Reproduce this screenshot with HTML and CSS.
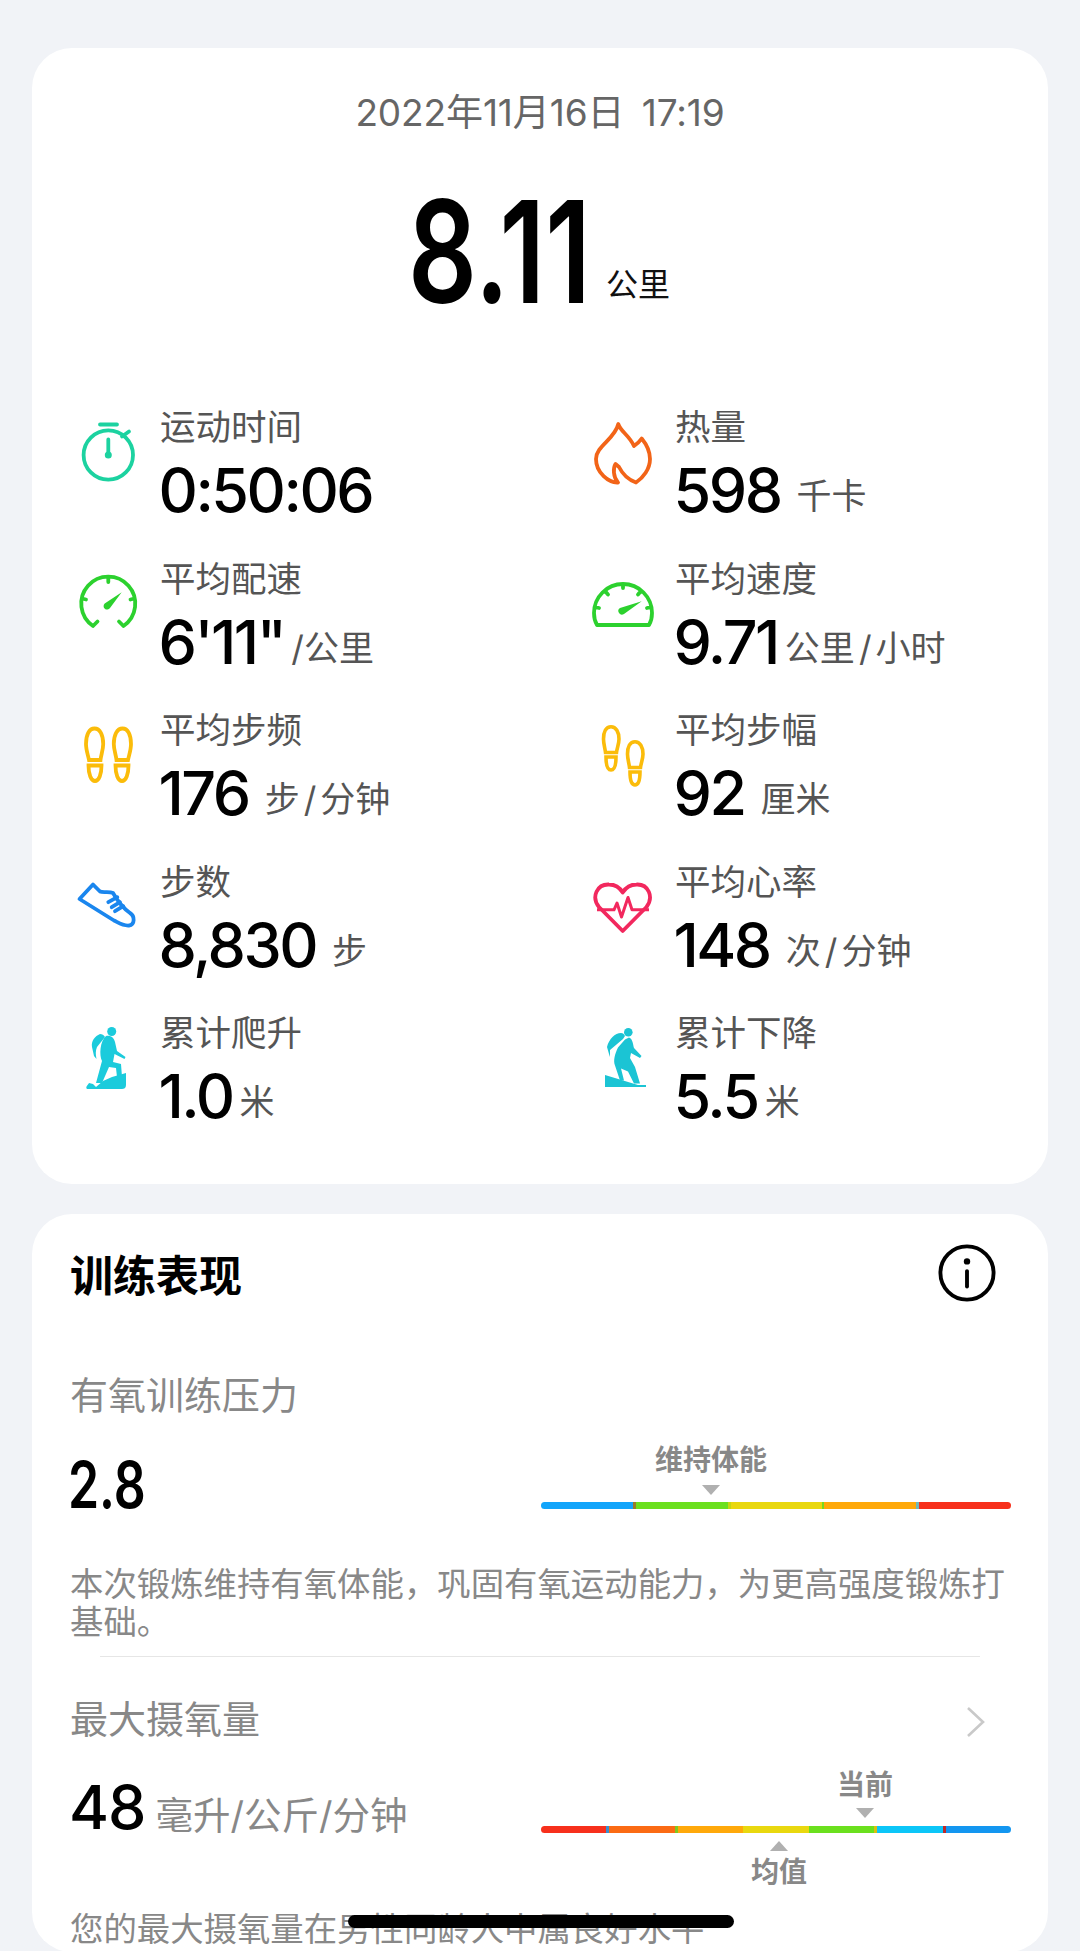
FILE: index.html
```html
<!DOCTYPE html>
<html lang="zh-CN">
<head>
<meta charset="utf-8">
<title>运动记录</title>
<link rel="stylesheet" href="styles.css">
</head>
<body>
<main class="page">
  <section class="card summary">
    <div class="date">2022年11月16日 17:19</div>
    <div class="total"><span class="total-num">8.11</span><span class="total-unit">公里</span></div>
    <div class="stats">
      <div class="stat">
        <svg class="ico" viewBox="0 0 64 64"><g fill="none" stroke="#1cd2a0" stroke-width="3.8" stroke-linecap="round"><circle cx="32.300" cy="34" r="24.700"/><path d="M24 3.500h17M46 15.500l7-5M32.300 18.500V33"/></g><circle cx="32.300" cy="34" r="3.500" fill="#1cd2a0"/></svg>
        <div class="txt"><div class="lab">运动时间</div><div class="val">0:50:06</div></div>
      </div>
      <div class="stat">
        <svg class="ico" viewBox="0 0 64 64"><path d="M27.300 3C29 10 38 14 43 25c3-2 6-5 7.700-7.500C56 24 59 30 59 38c0 10-7 19-14 23.500-7-2.500-13-7.500-17-15.500l-3.500-3c-2.500 4-2.500 13 2.500 18.500C18 62 5 52 5 38 5 25 24 18 27.300 3Z" fill="none" stroke="#f26418" stroke-width="3.800" stroke-linejoin="round"/></svg>
        <div class="txt"><div class="lab">热量</div><div class="val">598<span class="unit u-gap">千卡</span></div></div>
      </div>
      <div class="stat">
        <svg class="ico" viewBox="0 0 64 64"><g fill="none" stroke="#2cd12e" stroke-width="3.800" stroke-linecap="round"><path d="M17 53A27 27 0 1 1 47.500 53M17 53l4.500-4.500M47.500 53 43 48.500M32.300 5v4M6 25.500l4 1M58.500 25.500l-4 1"/></g><path d="M45.700 19.200 34 35a3.500 3.500 0 1 1-5.300-4.500Z" fill="#2cd12e"/></svg>
        <div class="txt"><div class="lab">平均配速</div><div class="val">6'11"<span class="unit u-tight">/公里</span></div></div>
      </div>
      <div class="stat">
        <svg class="ico" viewBox="0 0 64 64"><g fill="none" stroke="#2cd12e" stroke-width="3.800" stroke-linecap="round" stroke-linejoin="round"><path d="M6 52h52q3-5 3-12a29 29 0 0 0-58 0q0 7 3 12ZM32 11v4M14 18l3 3.500M50 18l-3 3.500M4 34l4 1M60 34l-4 1"/></g><path d="M50.700 28.200 33 41a3.500 3.500 0 1 1-4-6Z" fill="#2cd12e"/></svg>
        <div class="txt"><div class="lab">平均速度</div><div class="val">9.71<span class="unit">公里<i class="sl">/</i>小时</span></div></div>
      </div>
      <div class="stat">
        <svg class="ico" viewBox="0 0 64 64"><g fill="none" stroke="#fbbc0a" stroke-width="3.800"><path d="M18.500 4.500c5.500 0 8.700 6.500 8.700 15.500 0 6-2.200 11-2.700 16H13c-1-5-3-10-3-16 0-9 3-15.500 8.500-15.500ZM12.500 41.500h13c0 8.500-2.500 15.500-6.500 15.500s-6.500-7-6.500-15.500Z"/><path d="M46.500 4.500c-5.500 0-8.700 6.500-8.700 15.500 0 6 2.200 11 2.700 16H52c1-5 3-10 3-16 0-9-3-15.500-8.500-15.500ZM52.500 41.500h-13c0 8.500 2.500 15.500 6.500 15.500s6.500-7 6.500-15.500Z"/></g></svg>
        <div class="txt"><div class="lab">平均步频</div><div class="val">176<span class="unit u-gap">步<i class="sl">/</i>分钟</span></div></div>
      </div>
      <div class="stat">
        <svg class="ico" viewBox="0 0 64 64"><g fill="none" stroke="#fbbc0a" stroke-width="3.600"><path d="M20 2.700c5 0 8 5.300 8 12.300 0 5-2 9-2.500 13.500h-11C14 24 12.500 20 12.500 15c0-7 2.500-12.300 7.500-12.300ZM15 33h10c0 8-1.500 13-5 13s-5-5-5-13Z"/><path d="M44 17.700c5 0 8 5.300 8 12.300 0 5-2 9-2.500 13.500h-11C38 39 36.500 35 36.500 30c0-7 2.500-12.300 7.500-12.300ZM39 48h10c0 8-1.500 13-5 13s-5-5-5-13Z"/></g></svg>
        <div class="txt"><div class="lab">平均步幅</div><div class="val">92<span class="unit u-gap">厘米</span></div></div>
      </div>
      <div class="stat">
        <svg class="ico" viewBox="0 0 64 64"><g fill="none" stroke="#1a86ee" stroke-width="3.800" stroke-linejoin="round" stroke-linecap="round"><path d="M3.500 23 17 8.500l7 7c3 1.500 9-.5 13 1.500 4 7 10 15 17 20 5 3 5 12-1 12.500-6 .5-10-2.500-15-5Z"/><path d="M32.300 26.200l9-5M35.700 31.200l8.300-5M39 35.200l8.300-5"/></g></svg>
        <div class="txt"><div class="lab">步数</div><div class="val">8,830<span class="unit u-gap">步</span></div></div>
      </div>
      <div class="stat">
        <svg class="ico" viewBox="0 0 64 64"><g fill="none" stroke="#f2285e" stroke-width="3.800" stroke-linejoin="round"><path d="M31.700 55 8 31C0 21 6 8 18 8.500c6 0 11 3.500 13.700 8 2.800-4.500 7.800-8 13.800-8C57.500 8 63 21 55.500 31Z"/><path d="M6 33.800h17l3-6.800 4.500 14L37 21.500l4 12.300h17" stroke-width="3"/></g></svg>
        <div class="txt"><div class="lab">平均心率</div><div class="val">148<span class="unit u-gap">次<i class="sl">/</i>分钟</span></div></div>
      </div>
      <div class="stat">
        <svg class="ico" viewBox="0 0 64 64"><g fill="#1bcbdc"><circle cx="35.700" cy="4.500" r="4.500"/><path d="M30 9c5-1 8 2 9 6l2 9 8.500 6-1 2-10-5-1.500 8 8 2 1 13h-5l-1-9-7-1-7 16h-6l6-22c-3-6-2-20 4-25Z"/><path d="M24 7c-5 2-9 7-8 13l2 9 2.500 3c-1-5-1-8 .500-12l8-10c-1-2-3-3-5-3Z"/><path d="M11 62c-2-2 1-4 2-6l4 1 3 3 7-6 9-4 14-4v12c0 3-2 4-4 4Z"/></g></svg>
        <div class="txt"><div class="lab">累计爬升</div><div class="val">1.0<span class="unit">米</span></div></div>
      </div>
      <div class="stat">
        <svg class="ico" viewBox="0 0 64 64"><g fill="#1bc4d4"><circle cx="37.300" cy="5.300" r="4.300"/><path d="M30 6c-6 0-12 6-14 14l2 7 1 3v-7l13-11 2-3c-1-2-2-3-4-3Z"/><path d="M38 10.500c4 1.500 4 7.500 5 10.500l7.500 8-1.500 2-9-5-1 5 5 9 5 16.500h-6l-6-12-7-3 3 12h-4l-5-15c-2-5 0-12 3-18l7-8Z"/><path d="M14 48l33 10h8v2H14Z"/></g></svg>
        <div class="txt"><div class="lab">累计下降</div><div class="val">5.5<span class="unit">米</span></div></div>
      </div>
    </div>
  </section>

  <section class="card perf">
    <div class="perf-head">
      <h2 class="perf-title">训练表现</h2>
      <svg class="info" viewBox="0 0 60 60"><circle cx="30" cy="30" r="27.500" fill="none" stroke="#000" stroke-width="4"/><circle cx="30" cy="18" r="3.300"/><rect x="28" y="26" width="4" height="20" rx="2"/></svg>
    </div>

    <div class="metric m-first">
      <div class="m-title">有氧训练压力</div>
      <div class="m-row">
        <div class="m-val narrow">2.8</div>
        <div class="gauge g1">
          <div class="g-top g-top1"><span class="g-label">维持体能</span><i class="tri-down"></i></div>
          <div class="bar">
            <b class="c-blue"></b><b class="c-green"></b><b class="c-yellow"></b><b class="c-orange"></b><b class="c-red"></b>
          </div>
        </div>
      </div>
      <p class="m-desc">本次锻炼维持有氧体能，巩固有氧运动能力，为更高强度锻炼打基础。</p>
    </div>

    <div class="sep"></div>

    <div class="metric">
      <div class="m-head"><div class="m-title">最大摄氧量</div>
        <svg class="chev" viewBox="0 0 22 34"><path d="M3 3l15 14L3 31" fill="none" stroke="#c9c9c9" stroke-width="2.600"/></svg>
      </div>
      <div class="m-row m-row2">
        <div class="m-val m-val2">48<span class="m-unit">毫升/公斤/分钟</span></div>
        <div class="gauge g2">
          <div class="g-top g-top2"><span class="g-label">当前</span><i class="tri-down"></i></div>
          <div class="bar bar7">
            <b class="c-red"></b><b class="c-dorange"></b><b class="c-orange"></b><b class="c-yellow"></b><b class="c-green"></b><b class="c-cyan"></b><b class="c-blue2"></b>
          </div>
          <div class="g-bot"><i class="tri-up"></i><span class="g-label">均值</span></div>
        </div>
      </div>
      <p class="m-desc m-desc2">您的最大摄氧量在男性同龄人中属良好水平</p>
    </div>
  </section>
</main>
<div class="home"></div>
</body>
</html>
```
FILE: styles.css
```css
* { box-sizing: border-box; }
html, body { margin: 0; padding: 0; }
body {
  width: 1080px;
  height: 1951px;
  overflow: hidden;
  background: #f1f3f7;
  font-family: Inter, "Noto Sans CJK SC", sans-serif;
  position: relative;
}
.page { padding: 48px 32px 0; display: flex; flex-direction: column; gap: 30px; }
.card { background: #fff; border-radius: 40px; }
.summary { height: 1136px; padding-top: 40px; }
.date { text-align: center; font-size: 37px; line-height: 50px; color: #666; word-spacing: 7px; letter-spacing: -.1px; }
.total { display: flex; align-items: flex-end; height: 130px; margin-top: 48px; padding-left: 376px; }
.total-num {
  display: inline-block;
  font-size: 142px; line-height: 130px; font-weight: 600; color: #000;
  width: 198px;
  transform: scaleX(.76);
  transform-origin: left center;
}
.total-unit { font-size: 32px; line-height: 40px; color: #111; margin-bottom: 11px; }
.stats {
  display: grid;
  grid-template-columns: 515px 1fr;
  grid-auto-rows: 151.500px;
  margin-top: 90px;
  padding-left: 44px;
}
.stat { display: flex; align-items: flex-start; }
.ico { width: 64px; height: 64px; margin: 15px 20px 0 0; flex: none; }
.txt { display: flex; flex-direction: column; }
.lab { font-size: 35.500px; line-height: 44px; color: #555; }
.val { font-size: 61px; line-height: 80px; font-weight: 500; letter-spacing: -2.500px; color: #000; display: flex; align-items: baseline; margin-left: -1.500px; }
.unit { font-size: 35px; font-weight: 400; letter-spacing: 0; color: #555; margin-left: 7px; transform: translateY(-3px); }
.u-gap { margin-left: 16px; }
.u-tight { margin-left: 7px; }
.sl { font-style: normal; margin: 0 4px; }

.perf { height: 738px; padding: 28px 38px 0; position: relative; }
.perf-head { display: flex; justify-content: space-between; align-items: center; height: 62px; }
.perf-title { margin: 0; font-size: 43px; font-weight: 700; color: #000; }
.info { width: 58px; height: 58px; margin-right: 14px; }
.metric { display: flex; flex-direction: column; }
.m-first { margin-top: 66px; }
.m-title { font-size: 38px; line-height: 50px; color: #888; }
.m-head { display: flex; justify-content: space-between; align-items: center; padding-right: 23px; }
.chev { width: 22px; height: 34px; margin-top: 6px; }
.m-row { display: flex; justify-content: space-between; align-items: flex-start; margin-top: 18px; height: 128px; }
.m-row2 { margin-top: 23px; height: 130px; }
.m-val { font-size: 61px; line-height: 80px; font-weight: 500; letter-spacing: -1px; color: #000; }
.m-val2 { margin-left: -1px; }
.narrow {
  display: inline-block; width: 110px;
  transform: scaleX(.78); transform-origin: left center;
  font-size: 64px; font-weight: 600; letter-spacing: 0; margin: 7px 0 0 -2px;
}
.m-unit { font-size: 37.500px; font-weight: 400; letter-spacing: 0; color: #888; margin-left: 10px; }
.gauge { width: 470px; margin-right: -1px; display: flex; flex-direction: column; }
.g1 { margin-top: 5px; }
.g2 { margin-top: 1px; }
.g-label { font-size: 28px; line-height: 34px; color: #888; font-weight: 700; white-space: nowrap; }
.g-top { display: flex; flex-direction: column; align-items: center; }
.g-top1 { margin-left: 110px; width: 120px; height: 52px; }
.g-top2 { margin-left: 294px; width: 60px; height: 50px; }
.tri-down { width: 0; height: 0; border-left: 9px solid transparent; border-right: 9px solid transparent; border-top: 10px solid #b0b0b0; margin-top: 8px; }
.g-top2 .tri-down { margin-top: 6px; }
.tri-up { width: 0; height: 0; border-left: 9px solid transparent; border-right: 9px solid transparent; border-bottom: 10px solid #b0b0b0; margin-bottom: 4px; }
.bar { display: flex; height: 7px; border-radius: 4px; overflow: hidden; margin-top: 7px; flex: none; }
.bar7 { margin-top: 8px; }
.bar b { flex: 1; }
.c-blue { background: #12a5fb; border-right: 3px solid #9a7b2a; }
.c-green { background: #6be01e; border-right: 3px solid #c6d810; }
.c-yellow { background: #e9d80f; border-right: 2px solid #78d820; }
.c-orange { background: #ffa90a; border-right: 3px solid #70b8b8; }
.c-red { background: #f7301c; }
.bar7 .c-red { border-right: 3px solid #3a8fd0; }
.c-dorange { background: #fb6b14; border-right: 3px solid #80c820; }
.bar7 .c-orange { border-right: 0; }
.bar7 .c-yellow { border-right: 0; }
.bar7 .c-green { border-right: 3px solid #d8c010; }
.c-cyan { background: #0cc6f8; border-right: 3px solid #c02828; }
.c-blue2 { background: #1396f0; }
.g-bot { display: flex; flex-direction: column; align-items: center; width: 60px; margin-left: 208px; margin-top: 8px; }
.m-desc { margin: 0; font-size: 33.400px; line-height: 37.500px; color: #888; }
.m-desc2 { margin-top: 14px; }
.sep { height: 1px; background: #e6e6e6; margin: 15px 30px 37px; }

.home { position: absolute; left: 348px; top: 1915px; width: 386px; height: 13px; border-radius: 7px; background: #000; }
```
